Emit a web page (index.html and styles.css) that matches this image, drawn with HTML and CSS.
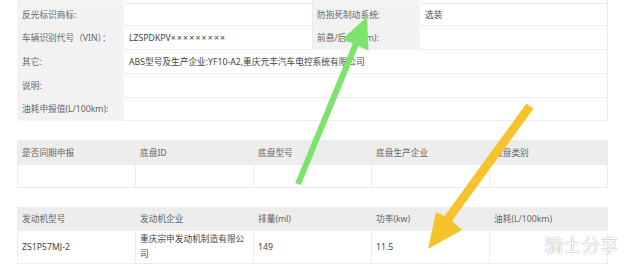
FILE: index.html
```html
<!DOCTYPE html>
<html lang="zh">
<head>
<meta charset="utf-8">
<link rel="stylesheet" href="styles.css">
</head>
<body>
<div class="page">
  <table class="info">
    <colgroup><col class="c1"><col class="c2"><col class="c3"><col class="c4"></colgroup>
    <tr class="r0"><td class="lbl"></td><td></td><td class="lbl"></td><td></td></tr>
    <tr class="r1"><td class="lbl">反光标识商标:</td><td></td><td class="lbl">防抱死制动系统:</td><td>选装</td></tr>
    <tr class="r2"><td class="lbl">车辆识别代号（VIN）：</td><td>LZSPDKPV<span class="mask">×××××××××</span></td><td class="lbl">前悬/后悬(mm):</td><td></td></tr>
    <tr class="r3"><td class="lbl">其它:</td><td colspan="3">ABS型号及生产企业:YF10-A2,重庆元丰汽车电控系统有限公司</td></tr>
    <tr class="r4"><td class="lbl">说明:</td><td colspan="3"></td></tr>
    <tr class="r5"><td class="lbl">油耗申报值(L/100km):</td><td colspan="3"></td></tr>
  </table>

  <table class="grid chassis">
    <tr class="head"><td>是否同期申报</td><td>底盘ID</td><td>底盘型号</td><td>底盘生产企业</td><td>底盘类别</td></tr>
    <tr class="row"><td></td><td></td><td></td><td></td><td></td></tr>
  </table>

  <table class="grid engine">
    <tr class="head"><td>发动机型号</td><td>发动机企业</td><td>排量(ml)</td><td>功率(kw)</td><td>油耗(L/100km)</td></tr>
    <tr class="row tall"><td>ZS1P57MJ-2</td><td>重庆宗申发动机制造有限公司</td><td>149</td><td>11.5</td><td></td></tr>
  </table>

  <svg class="arrows" width="630" height="267" viewBox="0 0 630 267">
    <polygon class="green" points="295.2,182.9 300.8,185.1 358.3,45.9 368.5,50.5 367,17 342.5,39 352.7,43.5"/>
    <polygon class="yellow" points="526.4,103.4 533.6,108.6 452,221 462,230 428,249 436,212 444.5,216"/>
  </svg>
  <div class="mark">骑士分享</div>
</div>
</body>
</html>
```
FILE: styles.css
```css
html, body {
  margin: 0;
  background: #fff;
}
body {
  font-family: "Noto Sans", "Noto Sans CJK SC", sans-serif;
  font-size: 8.7px;
  color: #555;
}
.page {
  position: relative;
  width: 630px;
  height: 267px;
  overflow: hidden;
  padding-left: 17px;
  box-sizing: border-box;
}
table {
  border-collapse: collapse;
  table-layout: fixed;
  width: 590px;
}
td {
  border: 1px solid #ececec;
  padding: 0 4px;
  white-space: nowrap;
  overflow: hidden;
  vertical-align: middle;
  line-height: 14px;
}
.info {
  margin-top: -20px;
}
.info .c1 { width: 106px; }
.info .c2 { width: 189px; }
.info .c3 { width: 107px; }
.info .c4 { width: 188px; }
.info td { padding-left: 5px; color: #444; }
.info td.lbl {
  background: #f2f2f2;
  color: #666;
  padding-left: 4px;
  border-color: #f7f7f7;
}
.mask { letter-spacing: 1.2px; }
.info .r0 { height: 23px; }
.info .r1 { height: 22px; }
.info .r2 { height: 24px; }
.info .r3 { height: 24px; }
.info .r4 { height: 24px; }
.info .r5 { height: 23px; }

.grid {
  margin-top: 19px;
}
.grid td {
  width: 118px;
  box-sizing: border-box;
}
.grid .head td {
  background: #ededed;
  color: #666;
  border-color: #ededed;
}
.grid .head { height: 24px; }
.grid .row { height: 23px; }
.grid .row td { color: #444; }
.grid .tall { height: 33px; }
.grid .tall td {
  white-space: normal;
  line-height: 15px;
  padding-right: 4px;
}
.engine .head { height: 23px; }

.arrows {
  position: absolute;
  left: 0;
  top: 0;
  pointer-events: none;
}
.green { fill: #7de46b; }
.yellow { fill: #f5c42d; }

.mark {
  position: absolute;
  left: 545px;
  top: 231px;
  font-family: "Noto Sans CJK SC", sans-serif;
  font-size: 18px;
  letter-spacing: 0.5px;
  color: #fff;
  text-shadow: 0 0 1px #aaa, 0 0 1px #aaa;
}
```
